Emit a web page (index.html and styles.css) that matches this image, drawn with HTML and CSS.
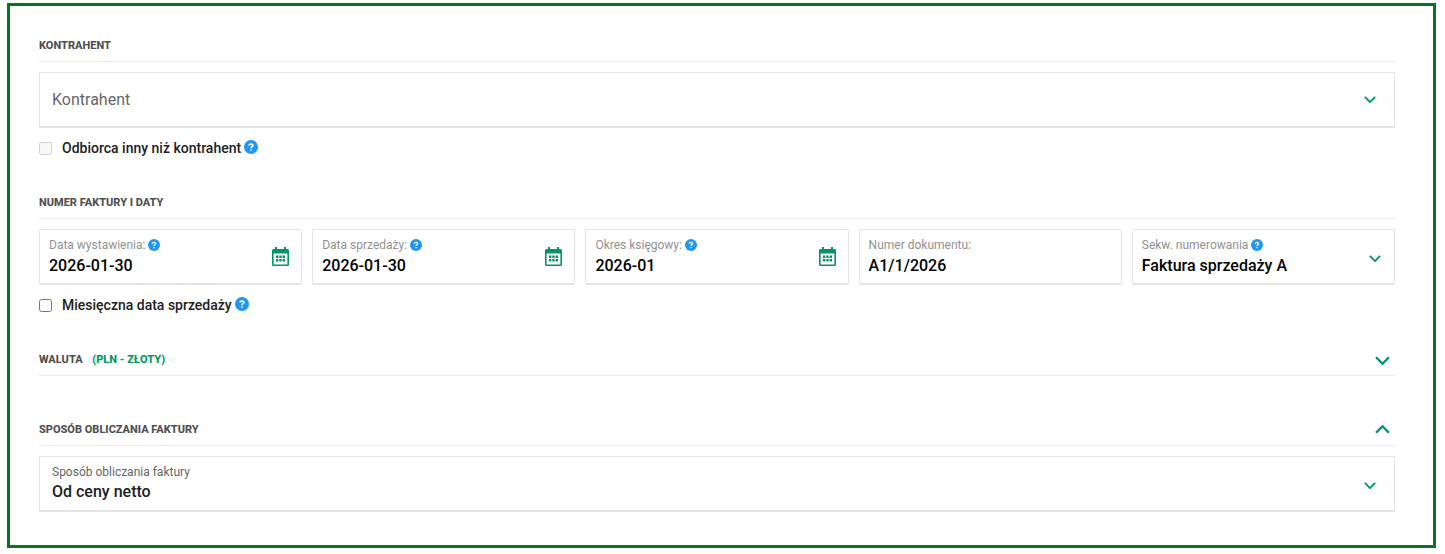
FILE: index.html
```html
<!DOCTYPE html>
<html lang="pl">
<head>
<meta charset="utf-8">
<meta name="viewport" content="width=device-width, initial-scale=1">
<title>Faktura</title>
<link rel="stylesheet" href="styles.css">
</head>
<body>
<svg class="sprite" aria-hidden="true">
  <symbol id="chevron" viewBox="0 0 14 8"><path d="M1 1l6 6 6-6" fill="none" stroke="currentColor" stroke-width="2.2"/></symbol>
  <symbol id="calendar" viewBox="0 0 17 19"><path fill="currentColor" fill-rule="evenodd" d="M3 0h2v2h7V0h2v2h1.500a1.500 1.500 0 0 1 1.500 1.500v14a1.500 1.500 0 0 1-1.500 1.500h-14A1.500 1.500 0 0 1 0 17.500v-14A1.500 1.500 0 0 1 1.500 2H3zM1.600 6.500v10.900h13.800V6.500zM4 8.500h2.400v2.400H4zm3.300 0h2.400v2.400H7.300zm3.300 0H13v2.400h-2.400zM4 12h2.400v2.400H4zm3.300 0h2.400v2.400H7.300zm3.300 0H13v2.400h-2.400z"/></symbol>
  <symbol id="help" viewBox="0 0 14 14"><circle cx="7" cy="7" r="7" fill="#2196f3"/><path d="M5.100 5.500C5.100 3.500 8.900 3.500 8.900 5.500 8.900 6.800 7 6.700 7 8.200" fill="none" stroke="#fff" stroke-width="1.500"/><path d="M6.200 9.200h1.600v1.500H6.200z" fill="#fff"/></symbol>
</svg>
<form class="frame">
  <section class="section">
    <div class="head"><h2 class="title">KONTRAHENT</h2></div>
    <div class="field wide">
      <div class="body">
        <select class="control placeholder" aria-label="Kontrahent"><option>Kontrahent</option></select>
      </div>
      <svg class="chevron middle"><use href="#chevron"/></svg>
    </div>
    <div class="check">
      <input class="box" type="checkbox" id="recipient" disabled>
      <label for="recipient">Odbiorca inny niż kontrahent</label>
      <button class="help" type="button" aria-label="Pomoc"><svg><use href="#help"/></svg></button>
    </div>
  </section>

  <section class="section">
    <div class="head"><h2 class="title">NUMER FAKTURY I DATY</h2></div>
    <div class="grid">
      <div class="field">
        <div class="body">
          <div class="caption"><label for="issued">Data wystawienia:</label><button class="help small" type="button" aria-label="Pomoc"><svg><use href="#help"/></svg></button></div>
          <input class="control" id="issued" type="text" value="2026-01-30">
        </div>
        <button class="pick" type="button" aria-label="Wybierz datę"><svg><use href="#calendar"/></svg></button>
      </div>
      <div class="field">
        <div class="body">
          <div class="caption"><label for="sold">Data sprzedaży:</label><button class="help small" type="button" aria-label="Pomoc"><svg><use href="#help"/></svg></button></div>
          <input class="control" id="sold" type="text" value="2026-01-30">
        </div>
        <button class="pick" type="button" aria-label="Wybierz datę"><svg><use href="#calendar"/></svg></button>
      </div>
      <div class="field">
        <div class="body">
          <div class="caption"><label for="period">Okres księgowy:</label><button class="help small" type="button" aria-label="Pomoc"><svg><use href="#help"/></svg></button></div>
          <input class="control" id="period" type="text" value="2026-01">
        </div>
        <button class="pick" type="button" aria-label="Wybierz okres"><svg><use href="#calendar"/></svg></button>
      </div>
      <div class="field">
        <div class="body">
          <div class="caption"><label for="number">Numer dokumentu:</label></div>
          <input class="control" id="number" type="text" value="A1/1/2026">
        </div>
      </div>
      <div class="field">
        <div class="body">
          <div class="caption"><label for="sequence">Sekw. numerowania</label><button class="help small" type="button" aria-label="Pomoc"><svg><use href="#help"/></svg></button></div>
          <select class="control" id="sequence"><option>Faktura sprzedaży A</option></select>
        </div>
        <svg class="chevron"><use href="#chevron"/></svg>
      </div>
    </div>
    <div class="check">
      <input class="box" type="checkbox" id="monthly">
      <label for="monthly">Miesięczna data sprzedaży</label>
      <button class="help" type="button" aria-label="Pomoc"><svg><use href="#help"/></svg></button>
    </div>
  </section>

  <section class="section collapsed">
    <div class="head">
      <h2 class="title">WALUTA <span class="currency">(PLN - ZŁOTY)</span></h2>
      <button class="toggle" type="button" aria-label="Rozwiń" aria-expanded="false"><svg><use href="#chevron"/></svg></button>
    </div>
  </section>

  <section class="section">
    <div class="head">
      <h2 class="title">SPOSÓB OBLICZANIA FAKTURY</h2>
      <button class="toggle open" type="button" aria-label="Zwiń" aria-expanded="true"><svg><use href="#chevron"/></svg></button>
    </div>
    <div class="field wide">
      <div class="body">
        <div class="caption"><label for="method">Sposób obliczania faktury</label></div>
        <select class="control" id="method"><option>Od ceny netto</option></select>
      </div>
      <svg class="chevron"><use href="#chevron"/></svg>
    </div>
  </section>
</form>
</body>
</html>
```
FILE: styles.css
```css
* { box-sizing: border-box; }

body {
  margin: 0;
  padding: 3px 9px 5px 7px;
  background: #fff;
  color: #212121;
  font-family: Roboto, "Noto Sans", sans-serif;
}

svg { display: block; }
.sprite { display: none; }

button {
  display: block;
  padding: 0;
  border: 0;
  background: none;
  color: #009660;
  cursor: pointer;
}

.frame {
  display: flex;
  flex-direction: column;
  gap: 29px;
  padding: 26px 38px 33px 29px;
  border: 3px solid #06751f;
}

.collapsed { margin-bottom: 11px; }

.head {
  display: flex;
  align-items: center;
  justify-content: space-between;
  height: 30px;
  margin-bottom: 10px;
  padding: 0 5px 1px 0;
  border-bottom: 1px solid #ebebeb;
}

.collapsed .head { margin-bottom: 0; }

.title {
  margin: 0;
  color: #505050;
  font-size: 11px;
  font-weight: 800;
  line-height: 16px;
}

.currency { margin-left: 7px; color: #009660; }

.toggle { padding-top: 1px; }
.toggle.open { padding: 0 0 2px; }
.toggle svg { width: 15px; height: 9px; }
.toggle.open svg { transform: rotate(180deg); }

.grid {
  display: grid;
  grid-template-columns: repeat(5, minmax(0, 1fr));
  gap: 10px;
}

.field {
  display: flex;
  align-items: center;
  min-height: 56px;
  padding: 0 12px 0 9px;
  border: 1px solid #e4e4e4;
  border-bottom-width: 2px;
  border-radius: 2px;
}

.field.wide { padding: 0 18px 0 12px; border-radius: 0; }

.body { flex: 1; min-width: 0; }

.caption {
  display: flex;
  align-items: center;
  gap: 3px;
  color: #919191;
  font-size: 12px;
  line-height: 16px;
}

.wide .caption { color: #666; }

.control {
  display: block;
  width: 100%;
  height: 24px;
  margin: 0;
  padding: 0;
  border: 0;
  outline: 0;
  appearance: none;
  background: none;
  color: #000;
  font-family: inherit;
  font-size: 16px;
  font-weight: 500;
  line-height: 24px;
}

.grid .control { padding-top: 1px; }
.grid input.control { padding-top: 2px; }
.wide .control { color: #212121; }
.wide .placeholder { color: #666; font-weight: 400; }

.chevron { width: 12px; height: 7px; margin: 4px 1px 0 0; color: #009660; }
.wide .chevron { margin-right: 0; }
.chevron.middle { margin-top: 0; }
.pick svg { width: 17px; height: 19px; }

.check {
  display: flex;
  align-items: center;
  height: 24px;
  margin-top: 8px;
  font-size: 14px;
  font-weight: 500;
  line-height: 20px;
}

.box { width: 13px; height: 13px; margin: 0 10px 0 0; }

.help { margin-left: 3px; }
.check .help { padding-bottom: 2px; }
.help svg { width: 14px; height: 14px; }
.help.small { margin-left: 0; }
.help.small svg { width: 12px; height: 12px; }
```
